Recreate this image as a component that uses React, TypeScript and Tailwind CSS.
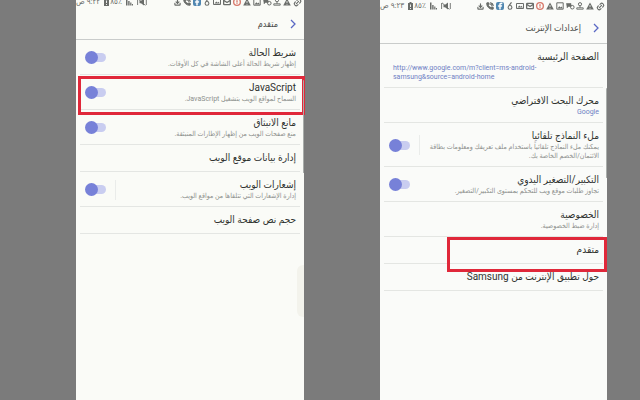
import React from "react";
import type { ReactNode } from "react";
import { CircleAlert, Download, Facebook, Link2, Mail, PhoneCall } from "lucide-react";

const StatusIcon = ({ children }: { children: ReactNode }) => {
  return <span className="flex w-[10px] justify-center">{children}</span>;
};

const Warning = () => {
  return (
    <svg viewBox="0 0 8 8" className="size-[8px]">
      <path d="M4 0.5L7.8 7.5H0.2z" fill="currentColor" />
      <path d="M4 3v2M4 5.8v0.9" stroke="#fafbf9" strokeWidth="0.8" />
    </svg>
  );
};

const StatusBar = ({ time, className }: { time: string; className: string }) => {
  return (
    <div
      dir="ltr"
      className={`flex flex-col justify-end overflow-hidden text-[#6a6d6a] ${className}`}
    >
      <div className="flex h-3 shrink-0 items-center justify-between pr-[2px]">
        <div className="flex items-center gap-1">
          <span dir="rtl" className="text-[8px] leading-3 whitespace-nowrap">
            {time}
          </span>
          <div className="flex items-center gap-px">
            <svg viewBox="0 0 5 8" className="h-[8px] w-[5px]">
              <path d="M1.5 0h2v1H5v7H0V1h1.5z" fill="currentColor" />
              <path d="M2.5 2.5v2.5M2.5 6v1" stroke="#fafbf9" strokeWidth="0.9" />
            </svg>
            <span dir="rtl" className="text-[8px] leading-3">
              ٪٨٥
            </span>
          </div>
          <svg viewBox="0 0 7 8" className="h-[8px] w-[7px]" fill="currentColor">
            <path d="M0 0.5h1.5v7H0zM2.2 3h1.4v4.5H2.2zM4.2 4.5h1.2v3H4.2zM5.9 6h1.1v1.5H5.9z" />
          </svg>
          <svg viewBox="0 0 10 8" className="h-[8px] w-[10px]">
            <path d="M2.5 2.8H4L7 0.5v7L4 5.2H2.5z" fill="currentColor" />
            <path d="M0.6 1v6M1 0.8l7.4 6.6M9.3 1v6" stroke="currentColor" strokeWidth="0.9" />
          </svg>
        </div>
        <div className="flex items-center">
          <StatusIcon>
            <Download className="size-[7px]" strokeWidth={4} />
          </StatusIcon>
          <StatusIcon>
            <PhoneCall className="size-[8px]" strokeWidth={3} fill="currentColor" />
          </StatusIcon>
          <StatusIcon>
            <Facebook
              className="size-[8px] rounded-[2px] bg-[#4f86b0] text-white"
              strokeWidth={1}
              fill="currentColor"
            />
          </StatusIcon>
          <StatusIcon>
            <svg viewBox="0 0 6 8" className="h-[8px] w-[6px]" fill="none" stroke="currentColor">
              <path d="M4.5 0.3L2.2 3.4" strokeWidth="1.1" />
              <circle cx="3" cy="5.4" r="1.9" strokeWidth="1.1" />
            </svg>
          </StatusIcon>
          <StatusIcon>
            <svg viewBox="0 0 8 8" className="size-[8px]">
              <path d="M0.5 1.5h7v5h-7z" fill="none" stroke="currentColor" />
              <path d="M1.5 5.5l1.8-2 1.3 1.2 1-1 1.2 1.8z" fill="currentColor" />
            </svg>
          </StatusIcon>
          <StatusIcon>
            <Mail className="size-[8px]" strokeWidth={4} />
          </StatusIcon>
          <StatusIcon>
            <CircleAlert className="size-[8px] text-[#d8786a]" strokeWidth={4} />
          </StatusIcon>
          <StatusIcon>
            <Warning />
          </StatusIcon>
          <StatusIcon>
            <svg viewBox="0 0 8 8" className="size-[8px]">
              <path d="M0.8 0.8h6.4v6.4H0.8z" fill="none" stroke="currentColor" />
              <path d="M1.5 6.5l1.8-2.2 1.3 1.2 1-1 1.2 2z" fill="currentColor" />
            </svg>
          </StatusIcon>
          <StatusIcon>
            <svg viewBox="0 0 9 8" className="h-[8px] w-[9px]" fill="none" stroke="currentColor">
              <path d="M0.5 1.5h4.5v3H2.5l-1.5 1.3V4.5z" fill="currentColor" strokeWidth="0.6" />
              <circle cx="6.3" cy="5.2" r="1.8" />
            </svg>
          </StatusIcon>
          <StatusIcon>
            <svg viewBox="0 0 8 8" className="size-[8px]" fill="none" stroke="currentColor">
              <circle cx="4" cy="2.2" r="1.6" />
              <path d="M4 3.8v2M0.8 7.2V5.8h6.4v1.4z" strokeWidth="0.9" />
            </svg>
          </StatusIcon>
          <StatusIcon>
            <Warning />
          </StatusIcon>
          <StatusIcon>
            <Link2 className="size-[9px] -rotate-45" strokeWidth={3} />
          </StatusIcon>
        </div>
      </div>
    </div>
  );
};

const Header = ({ title }: { title: string }) => {
  return (
    <header className="flex h-8 items-center gap-3 border-b border-[#c9cccb] px-2">
      <button aria-label="رجوع" className="text-[#5a68c4]">
        <svg viewBox="0 0 6 10" className="h-[10px] w-[6px]" fill="none" stroke="currentColor">
          <path d="M1 1l4 4-4 4" strokeWidth="1.3" />
        </svg>
      </button>
      <h1 className="text-[9px] leading-3 text-[#4a4d4a]">{title}</h1>
    </header>
  );
};

const Sub = ({ children }: { children: ReactNode }) => {
  return <span className="block text-[7px] leading-[9px] text-[#8d908d]">{children}</span>;
};

const Row = ({ title, children }: { title: string; children?: ReactNode }) => {
  return (
    <button
      className={`block w-full border-b border-[#e4e6e3] pt-[6px] pr-1 pl-[9px] text-start ${
        children ? "pb-[5px]" : "pb-[6px]"
      }`}
    >
      <span className="block text-[10px] leading-[14px] text-[#2f322f]">{title}</span>
      {children}
    </button>
  );
};

const ToggleRow = ({
  id,
  title,
  separator,
  children,
}: {
  id: string;
  title: string;
  separator?: boolean;
  children: ReactNode;
}) => {
  return (
    <div className="flex items-center border-b border-[#e4e6e3] pt-[6px] pr-1 pb-[5px] pl-[5px]">
      <label htmlFor={id} className="min-w-0 flex-1">
        <span className="block text-[10px] leading-[14px] text-[#2f322f]">{title}</span>
        {children}
      </label>
      <div
        className={`flex h-5 w-[31px] items-center justify-end border-r ${
          separator ? "border-[#eaecea]" : "border-transparent"
        }`}
      >
        <input
          id={id}
          type="checkbox"
          role="switch"
          defaultChecked
          className="relative h-[13px] w-[21px] appearance-none before:absolute before:top-[2px] before:right-0 before:h-[9px] before:w-4 before:rounded-full before:bg-[#c9cdf0] after:absolute after:top-0 after:left-0 after:size-[13px] after:rounded-full after:bg-[#7781d8]"
        />
      </div>
    </div>
  );
};

const App = () => {
  return (
    <main
      dir="rtl"
      lang="ar"
      className="min-h-screen bg-[#7b7b7b] font-['Roboto','DejaVu_Sans_Condensed','DejaVu_Sans',sans-serif]"
    >
      <div dir="ltr" className="grid min-h-screen grid-cols-[76fr_228fr_76fr_227fr_33fr]">
        <section dir="rtl" className="relative col-start-2 bg-[#fafbf7]">
          <StatusBar time="٩:٢٢ ص" className="h-[8px]" />
          <Header title="متقدم" />
          <div className="px-1">
            <ToggleRow id="status" title="شريط الحالة">
              <Sub>إظهار شريط الحالة أعلى الشاشة في كل الأوقات.</Sub>
            </ToggleRow>
            <div className="relative">
              <ToggleRow id="js" title="JavaScript">
                <Sub>السماح لمواقع الويب بتشغيل JavaScript.</Sub>
              </ToggleRow>
              <div className="pointer-events-none absolute top-px -right-[5px] -bottom-[5px] -left-[2px] border-[3px] border-[#e0283a]" />
            </div>
            <ToggleRow id="popups" title="مانع الانبثاق">
              <Sub>منع صفحات الويب من إظهار الإطارات المنبثقة.</Sub>
            </ToggleRow>
            <Row title="إدارة بيانات موقع الويب" />
            <ToggleRow id="notify" title="إشعارات الويب" separator>
              <Sub>إدارة الإشعارات التي تتلقاها من مواقع الويب.</Sub>
            </ToggleRow>
            <Row title="حجم نص صفحة الويب" />
          </div>
          <div className="absolute top-20 right-0 h-[93px] w-px rounded-full bg-[#a9adaa]" />
          <div className="absolute top-[265px] right-0 h-[52px] w-[7px] rounded-l-md bg-[#f3f3ec]" />
        </section>

        <section dir="rtl" className="relative col-start-4 bg-[#fafbf9]">
          <StatusBar time="٩:٢٣ ص" className="h-3" />
          <Header title="إعدادات الإنترنت" />
          <div className="px-1">
            <Row title="الصفحة الرئيسية">
              <span dir="ltr" className="block text-left text-[7px] leading-[9px] text-[#6f7fc4]">
                http://www.google.com/m?client=ms-android-
                <br />
                samsung&amp;source=android-home
              </span>
            </Row>
            <Row title="محرك البحث الافتراضي">
              <span className="block text-[7px] leading-[9px] text-[#6f7fc4]">Google</span>
            </Row>
            <ToggleRow id="autofill" title="ملء النماذج تلقائيا" separator>
              <Sub>
                يمكنك ملء النماذج تلقائياً باستخدام ملف تعريفك ومعلومات بطاقة الائتمان/الخصم الخاصة
                بك.
              </Sub>
            </ToggleRow>
            <ToggleRow id="zoom" title="التكبير/التصغير اليدوي">
              <Sub>تجاوز طلبات موقع ويب للتحكم بمستوى التكبير/التصغير.</Sub>
            </ToggleRow>
            <Row title="الخصوصية">
              <Sub>إدارة ضبط الخصوصية.</Sub>
            </Row>
            <div className="relative">
              <Row title="متقدم" />
              <div className="pointer-events-none absolute top-0 -right-1 -bottom-[8px] w-[160px] border-[3px] border-[#e0283a]" />
            </div>
            <Row title="حول تطبيق الإنترنت من Samsung" />
          </div>
          <div className="absolute top-[88px] right-0 h-[90px] w-px rounded-full bg-[#a9adaa]" />
        </section>
      </div>
    </main>
  );
};

export default App;
